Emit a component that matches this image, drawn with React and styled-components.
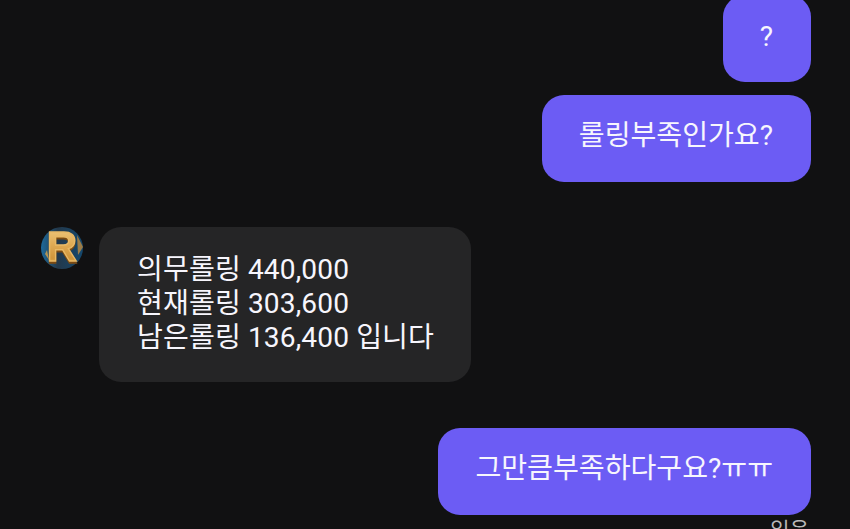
import styled, { createGlobalStyle } from "styled-components";

const GlobalStyle = createGlobalStyle`
  html, body {
    margin: 0;
    height: 100%;
    background: #111112;
    overflow: hidden;
  }
`;

function Avatar() {
  return (
    <AvatarBox viewBox="0 0 42 42" aria-hidden="true">
      <defs>
        <linearGradient id="sky" x1="0" y1="0" x2="1" y2="0">
          <stop offset="0%" stopColor="#1d6a9c" />
          <stop offset="40%" stopColor="#23384a" />
          <stop offset="100%" stopColor="#14496f" />
        </linearGradient>
        <linearGradient id="gold" x1="0" y1="0" x2="0" y2="1">
          <stop offset="0%" stopColor="#f2cf88" />
          <stop offset="45%" stopColor="#e0ab55" />
          <stop offset="75%" stopColor="#d0963c" />
          <stop offset="100%" stopColor="#f8c95e" />
        </linearGradient>
      </defs>
      <circle cx="21" cy="21" r="21" fill="url(#sky)" />
      <path d="M36 8 L42 20 L37 28 Z" fill="#c98f3c" opacity="0.75" />
      <path d="M4 27 L8 33 L6 23 Z" fill="#d7a24a" opacity="0.8" />
      <AvatarLetter x="21" y="34" textAnchor="middle" fill="url(#gold)">R</AvatarLetter>
    </AvatarBox>
  );
}

function App() {
  return (
    <Chat>
      <GlobalStyle />
      <FirstBubble>?</FirstBubble>
      <MineBubble>롤링부족인가요?</MineBubble>
      <IncomingRow>
        <Avatar />
        <TheirBubble>
          의무롤링 440,000
          <br />
          현재롤링 303,600
          <br />
          남은롤링 136,400 입니다
        </TheirBubble>
      </IncomingRow>
      <MineBubble $gap="46px">그만큼부족하다구요?ㅠㅠ</MineBubble>
      <ReadMark>읽음</ReadMark>
    </Chat>
  );
}

export default App;

const Chat = styled.div`
  width: 850px;
  height: 529px;
  overflow: hidden;
  box-sizing: border-box;
  padding: 0 39px 0 41px;
  display: flex;
  flex-direction: column;
  background: #111112;
  font-family: Roboto, "Noto Sans CJK KR", "Noto Sans", sans-serif;
  color: #f7f6fd;
`;

const Bubble = styled.div`
  box-sizing: border-box;
  font-size: 28.1px;
  line-height: 34px;
  border-radius: 22px;
`;

const MineBubble = styled(Bubble)`
  align-self: flex-end;
  flex: none;
  height: 87px;
  margin-top: ${(p) => p.$gap || "13px"};
  padding: 24px 38px 0 37px;
  background: #6c5cf4;
  white-space: nowrap;
`;

const FirstBubble = styled(MineBubble)`
  margin-top: -5px;
  padding-top: 25px;
`;

const IncomingRow = styled.div`
  display: flex;
  align-items: flex-start;
  gap: 16px;
  margin-top: 45px;
`;

const AvatarBox = styled.svg`
  width: 42px;
  height: 42px;
  flex: none;
`;

const AvatarLetter = styled.text`
  font-family: "Liberation Sans", sans-serif;
  font-weight: 700;
  font-size: 42px;
  stroke: #e8b966;
  stroke-width: 1.4px;
  filter: drop-shadow(0 2px 0 #7a4a12);
`;

const TheirBubble = styled(Bubble)`
  width: 372px;
  height: 155px;
  padding: 26px 38px 0;
  letter-spacing: 0.12px;
  background: #252526;
  white-space: nowrap;
`;

const ReadMark = styled.div`
  align-self: flex-end;
  flex: none;
  margin-top: 1px;
  margin-right: 2px;
  font-size: 21px;
  line-height: 28px;
  color: #b9b9b9;
`;
